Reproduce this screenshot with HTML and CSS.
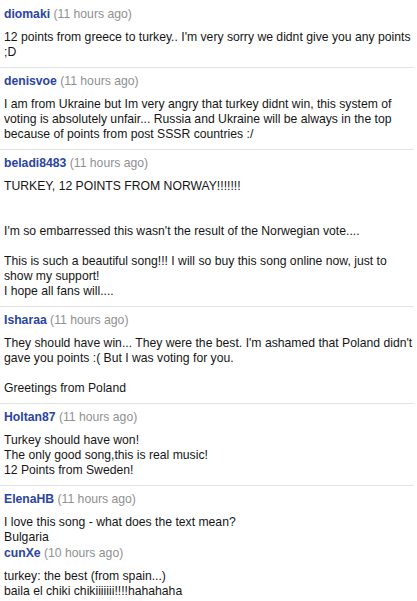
FILE: index.html
```html
<!DOCTYPE html>
<html>
<head>
<meta charset="utf-8">
<link rel="stylesheet" href="styles.css">
</head>
<body>
<div class="list">
  <div class="comment">
    <div class="head"><a class="user">diomaki</a> <span class="time">(11 hours ago)</span></div>
    <div class="body">12 points from greece to turkey.. I'm very sorry we didnt give you any points ;D</div>
  </div>
  <div class="comment">
    <div class="head"><a class="user">denisvoe</a> <span class="time">(11 hours ago)</span></div>
    <div class="body">I am from Ukraine but Im very angry that turkey didnt win, this system of voting is absolutely unfair... Russia and Ukraine will be always in the top because of points from post SSSR countries :/</div>
  </div>
  <div class="comment">
    <div class="head"><a class="user">beladi8483</a> <span class="time">(11 hours ago)</span></div>
    <div class="body">TURKEY, 12 POINTS FROM NORWAY!!!!!!!<br><br><br>I'm so embarressed this wasn't the result of the Norwegian vote....<br><br>This is such a beautiful song!!! I will so buy this song online now, just to show my support!<br>I hope all fans will....</div>
  </div>
  <div class="comment">
    <div class="head"><a class="user">Isharaa</a> <span class="time">(11 hours ago)</span></div>
    <div class="body">They should have win... They were the best. I'm ashamed that Poland didn't gave you points :( But I was voting for you.<br><br>Greetings from Poland</div>
  </div>
  <div class="comment">
    <div class="head"><a class="user">Holtan87</a> <span class="time">(11 hours ago)</span></div>
    <div class="body">Turkey should have won!<br>The only good song,this is real music!<br>12 Points from Sweden!</div>
  </div>
  <div class="comment last">
    <div class="head"><a class="user">ElenaHB</a> <span class="time">(11 hours ago)</span></div>
    <div class="body">I love this song - what does the text mean?<br>Bulgaria</div>
    <div class="head tight"><a class="user">cunXe</a> <span class="time">(10 hours ago)</span></div>
    <div class="body">turkey: the best (from spain...)<br>baila el chiki chikiiiiiii!!!!hahahaha</div>
  </div>
</div>
</body>
</html>
```
FILE: styles.css
```css
html, body {
  margin: 0;
  padding: 0;
  background: #ffffff;
}
body {
  font-family: "Liberation Sans", Arial, sans-serif;
  font-size: 12.2px;
  color: #151515;
  padding-top: 1px;
}
.list {
  width: 414px;
}
.comment {
  padding: 6px 0 7px 4px;
  border-bottom: 1px solid #e2e2e2;
}
.comment.last {
  border-bottom: none;
}
.head {
  line-height: 15px;
}
.user {
  color: #2a44a4;
  font-weight: bold;
  text-decoration: none;
}
.time {
  color: #909090;
}
.body {
  margin-top: 8px;
  line-height: 15px;
}
.head.tight {
  margin-top: 1px;
}
```
